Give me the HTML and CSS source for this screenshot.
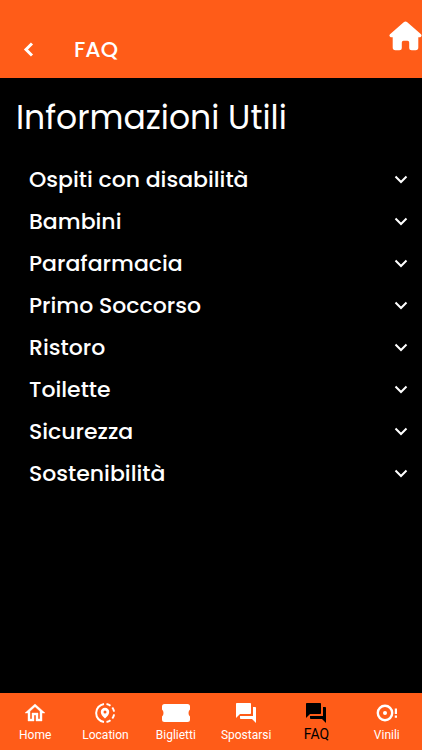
FILE: index.html
```html
<!DOCTYPE html>
<html lang="it">
<head>
<meta charset="utf-8">
<meta name="viewport" content="width=device-width, initial-scale=1">
<title>FAQ</title>
<link rel="stylesheet" href="styles.css">
</head>
<body>
<header class="topbar">
  <button class="back" type="button" aria-label="Indietro">
    <svg width="24" height="24" viewBox="0 0 24 24"><path class="line bold" d="M16 5.500L10 11.500l6 6"/></svg>
  </button>
  <h2 class="topbar-title">FAQ</h2>
  <a class="home-link" href="#home" aria-label="Home">
    <svg width="33" height="30" viewBox="0 0 33 30"><path d="M14.700 1.200Q16.500-.4 18.300 1.200L32 13.300Q33.200 14.600 32 15.800Q31.300 16.400 29.300 16.300V26.500Q29.300 29.200 26.600 29.200H22.700Q20.200 29.200 20.200 26.700V21.500Q20.200 19.800 18.500 19.800H14.500Q12.800 19.800 12.800 21.500V26.700Q12.800 29.200 10.300 29.200H6.400Q3.700 29.200 3.700 26.500V16.300Q1.700 16.400 1 15.800Q-.2 14.600 1 13.300Z"/></svg>
  </a>
</header>
<main class="content">
  <h1 class="title">Informazioni Utili</h1>
  <div class="list">
    <details><summary>Ospiti con disabilità<svg width="24" height="24" viewBox="0 0 24 24"><path class="line" d="M6.500 9.500L12 15l5.500-5.500"/></svg></summary></details>
    <details><summary>Bambini<svg width="24" height="24" viewBox="0 0 24 24"><path class="line" d="M6.500 9.500L12 15l5.500-5.500"/></svg></summary></details>
    <details><summary>Parafarmacia<svg width="24" height="24" viewBox="0 0 24 24"><path class="line" d="M6.500 9.500L12 15l5.500-5.500"/></svg></summary></details>
    <details><summary>Primo Soccorso<svg width="24" height="24" viewBox="0 0 24 24"><path class="line" d="M6.500 9.500L12 15l5.500-5.500"/></svg></summary></details>
    <details><summary>Ristoro<svg width="24" height="24" viewBox="0 0 24 24"><path class="line" d="M6.500 9.500L12 15l5.500-5.500"/></svg></summary></details>
    <details><summary>Toilette<svg width="24" height="24" viewBox="0 0 24 24"><path class="line" d="M6.500 9.500L12 15l5.500-5.500"/></svg></summary></details>
    <details><summary>Sicurezza<svg width="24" height="24" viewBox="0 0 24 24"><path class="line" d="M6.500 9.500L12 15l5.500-5.500"/></svg></summary></details>
    <details><summary>Sostenibilità<svg width="24" height="24" viewBox="0 0 24 24"><path class="line" d="M6.500 9.500L12 15l5.500-5.500"/></svg></summary></details>
  </div>
</main>
<nav class="tabs">
  <a class="tab" href="#home">
    <svg width="24" height="24" viewBox="0 0 24 24"><path stroke="currentColor" stroke-width=".4" d="M12 5.690l5 4.500V18h-2v-6H9v6H7v-7.810l5-4.500M12 3L2 12h3v8h6v-6h2v6h6v-8h3L12 3z"/></svg>
    <span>Home</span>
  </a>
  <a class="tab" href="#location">
    <svg width="24" height="24" viewBox="0 0 24 24"><path class="line" d="M11 2.900A9.200 9.200 0 0 0 11 21.100"/><path class="line" d="M13.500 2.900A9.200 9.200 0 0 1 17.500 4.700M19.300 6.500A9.200 9.200 0 0 1 21.100 10.700M21.100 13.400A9.200 9.200 0 0 1 19.300 17.500M17.500 19.300A9.200 9.200 0 0 1 13.500 21.100"/><path fill-rule="evenodd" d="M12 17.500C9.300 15.200 7.800 13.200 7.800 11a4.200 4.200 0 0 1 8.400 0c0 2.200-1.500 4.200-4.200 6.500zM12 9.600a1.500 1.500 0 1 0 0 3 1.500 1.500 0 0 0 0-3z"/></svg>
    <span>Location</span>
  </a>
  <a class="tab" href="#biglietti">
    <svg width="28" height="24" viewBox="0 0 28 24"><path d="M2.500 3H25.500Q28 3 28 5.500V8.500Q26.500 9.500 26.500 12T28 15.500V18.500Q28 21 25.500 21H2.500Q0 21 0 18.500V15.500Q1.500 14.500 1.500 12L1.500 12Q1.500 9.500 0 8.500V5.500Q0 3 2.500 3Z"/></svg>
    <span>Biglietti</span>
  </a>
  <a class="tab" href="#spostarsi">
    <svg width="24" height="24" viewBox="0 0 24 24"><path d="M21 6h-2v9H6v2c0 .55.45 1 1 1h11l4 4V7c0-.55-.45-1-1-1zm-4 6V3c0-.55-.45-1-1-1H3c-.55 0-1 .45-1 1v14l4-4h10c.55 0 1-.45 1-1z"/></svg>
    <span>Spostarsi</span>
  </a>
  <a class="tab active" href="#faq" aria-current="page">
    <svg width="24" height="24" viewBox="0 0 24 24"><path d="M21 6h-2v9H6v2c0 .55.45 1 1 1h11l4 4V7c0-.55-.45-1-1-1zm-4 6V3c0-.55-.45-1-1-1H3c-.55 0-1 .45-1 1v14l4-4h10c.55 0 1-.45 1-1z"/></svg>
    <span>FAQ</span>
  </a>
  <a class="tab" href="#vinili">
    <svg width="24" height="24" viewBox="0 0 24 24"><circle class="line ring" cx="10" cy="12" r="7.200"/><circle cx="10" cy="12" r="2"/><path d="M19.800 7.500h2.200v5.500h-2.200zM19.800 14.500h2.200v2.200h-2.200z"/></svg>
    <span>Vinili</span>
  </a>
</nav>
</body>
</html>
```

FILE: styles.css
```css
* {
  box-sizing: border-box;
}

body {
  margin: 0;
  min-height: 100vh;
  display: flex;
  flex-direction: column;
  background: #000;
  color: #fff;
  font-family: Poppins, Inter, sans-serif;
}

svg {
  display: block;
  flex: none;
  fill: currentColor;
}

.line {
  fill: none;
  stroke: currentColor;
  stroke-width: 2;
}

.bold {
  stroke-width: 3;
}

.ring {
  stroke-width: 2.4;
}

.topbar {
  display: flex;
  align-items: center;
  padding: 21px 0 0 16px;
  height: 78px;
  background: #ff5c18;
}

.back {
  padding: 0;
  border: 0;
  background: none;
  color: inherit;
}

.topbar-title {
  margin: 0 0 0 34px;
  font-size: 22px;
  line-height: 32px;
  font-weight: 500;
}

.home-link {
  margin-left: auto;
  align-self: flex-start;
  color: #fff;
}

.content {
  flex: 1;
  padding: 16px 9px 16px 16px;
}

.title {
  margin: 0;
  font-size: 33px;
  line-height: 48px;
  font-weight: 400;
}

.list {
  margin-top: 16px;
  padding-left: 13px;
}

summary {
  display: flex;
  align-items: center;
  justify-content: space-between;
  height: 42px;
  font-size: 22px;
  font-weight: 500;
  cursor: pointer;
  list-style: none;
}

.tabs {
  display: grid;
  grid-template-columns: repeat(6, 1fr);
  height: 57px;
  padding-top: 8px;
  background: #ff5c18;
}

.tab {
  display: flex;
  flex-direction: column;
  align-items: center;
  color: #fff;
  font-family: Roboto, sans-serif;
  font-size: 12px;
  line-height: 20px;
  text-decoration: none;
}

.active {
  color: #000;
  font-size: 14px;
  line-height: 18px;
}
```
